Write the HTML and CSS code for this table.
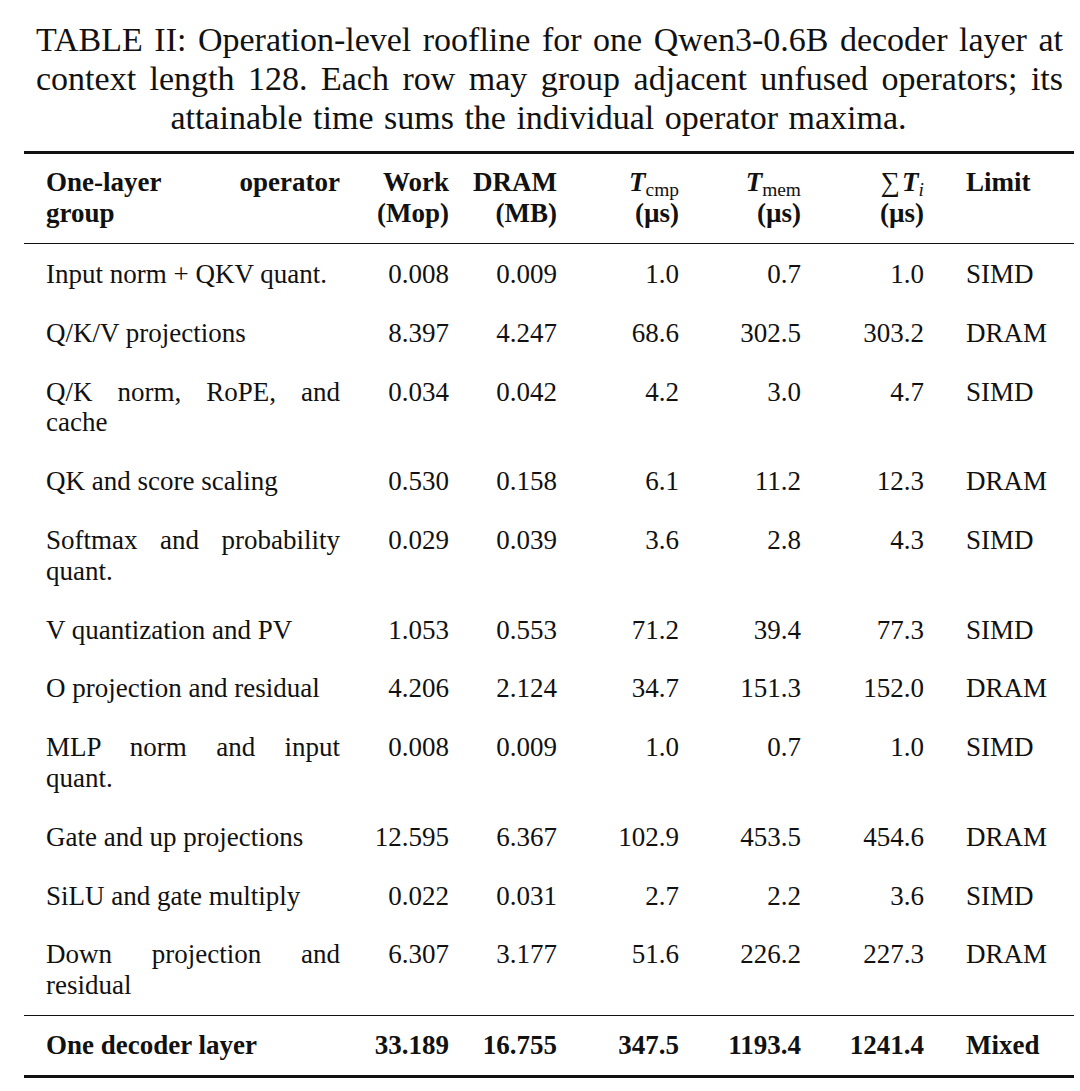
FILE: index.html
```html
<!DOCTYPE html>
<html>
<head>
  <title>TABLE II: Operation-level roofline</title>
  <link rel="stylesheet" href="styles.css">
</head>
<body>

<div class="page">
  <p class="caption">
    <span class="cap-line">TABLE II: Operation-level roofline for one Qwen3-0.6B decoder layer at</span>
    <span class="cap-line">context length 128. Each row may group adjacent unfused operators; its</span>
    <span class="cap-line cap-last">attainable time sums the individual operator maxima.</span>
  </p>

  <div class="roofline">
    <div class="row head-row">
      <div class="cell name"><span class="just">One-layer operator</span>group</div>
      <div class="cell num">Work<br>(Mop)</div>
      <div class="cell num">DRAM<br>(MB)</div>
      <div class="cell num"><i class="mv">T</i><sub class="sb">cmp</sub><br>(µs)</div>
      <div class="cell num"><i class="mv">T</i><sub class="sb">mem</sub><br>(µs)</div>
      <div class="cell num"><span class="sum">∑</span><i class="mv">T</i><sub class="sb sbi">i</sub><br>(µs)</div>
      <div class="cell lim">Limit</div>
    </div>

    <div class="body-rows">
      <div class="row">
        <div class="cell name">Input norm + QKV quant.</div>
        <div class="cell num">0.008</div>
        <div class="cell num">0.009</div>
        <div class="cell num">1.0</div>
        <div class="cell num">0.7</div>
        <div class="cell num">1.0</div>
        <div class="cell lim">SIMD</div>
      </div>
      <div class="row">
        <div class="cell name">Q/K/V projections</div>
        <div class="cell num">8.397</div>
        <div class="cell num">4.247</div>
        <div class="cell num">68.6</div>
        <div class="cell num">302.5</div>
        <div class="cell num">303.2</div>
        <div class="cell lim">DRAM</div>
      </div>
      <div class="row">
        <div class="cell name"><span class="just">Q/K norm, RoPE, and</span>cache</div>
        <div class="cell num">0.034</div>
        <div class="cell num">0.042</div>
        <div class="cell num">4.2</div>
        <div class="cell num">3.0</div>
        <div class="cell num">4.7</div>
        <div class="cell lim">SIMD</div>
      </div>
      <div class="row">
        <div class="cell name">QK and score scaling</div>
        <div class="cell num">0.530</div>
        <div class="cell num">0.158</div>
        <div class="cell num">6.1</div>
        <div class="cell num">11.2</div>
        <div class="cell num">12.3</div>
        <div class="cell lim">DRAM</div>
      </div>
      <div class="row">
        <div class="cell name"><span class="just">Softmax and probability</span>quant.</div>
        <div class="cell num">0.029</div>
        <div class="cell num">0.039</div>
        <div class="cell num">3.6</div>
        <div class="cell num">2.8</div>
        <div class="cell num">4.3</div>
        <div class="cell lim">SIMD</div>
      </div>
      <div class="row">
        <div class="cell name">V quantization and PV</div>
        <div class="cell num">1.053</div>
        <div class="cell num">0.553</div>
        <div class="cell num">71.2</div>
        <div class="cell num">39.4</div>
        <div class="cell num">77.3</div>
        <div class="cell lim">SIMD</div>
      </div>
      <div class="row">
        <div class="cell name">O projection and residual</div>
        <div class="cell num">4.206</div>
        <div class="cell num">2.124</div>
        <div class="cell num">34.7</div>
        <div class="cell num">151.3</div>
        <div class="cell num">152.0</div>
        <div class="cell lim">DRAM</div>
      </div>
      <div class="row">
        <div class="cell name"><span class="just">MLP norm and input</span>quant.</div>
        <div class="cell num">0.008</div>
        <div class="cell num">0.009</div>
        <div class="cell num">1.0</div>
        <div class="cell num">0.7</div>
        <div class="cell num">1.0</div>
        <div class="cell lim">SIMD</div>
      </div>
      <div class="row">
        <div class="cell name">Gate and up projections</div>
        <div class="cell num">12.595</div>
        <div class="cell num">6.367</div>
        <div class="cell num">102.9</div>
        <div class="cell num">453.5</div>
        <div class="cell num">454.6</div>
        <div class="cell lim">DRAM</div>
      </div>
      <div class="row">
        <div class="cell name">SiLU and gate multiply</div>
        <div class="cell num">0.022</div>
        <div class="cell num">0.031</div>
        <div class="cell num">2.7</div>
        <div class="cell num">2.2</div>
        <div class="cell num">3.6</div>
        <div class="cell lim">SIMD</div>
      </div>
      <div class="row">
        <div class="cell name"><span class="just">Down projection and</span>residual</div>
        <div class="cell num">6.307</div>
        <div class="cell num">3.177</div>
        <div class="cell num">51.6</div>
        <div class="cell num">226.2</div>
        <div class="cell num">227.3</div>
        <div class="cell lim">DRAM</div>
      </div>
    </div>

    <div class="row total-row">
      <div class="cell name">One decoder layer</div>
      <div class="cell num">33.189</div>
      <div class="cell num">16.755</div>
      <div class="cell num">347.5</div>
      <div class="cell num">1193.4</div>
      <div class="cell num">1241.4</div>
      <div class="cell lim">Mixed</div>
    </div>
  </div>
</div>

</body>
</html>
```

FILE: styles.css
```css
body {
  margin: 0;
  background-color: #fff;
  color: #111;
  font-family: "Liberation Serif", "Times New Roman", serif;
}

.page {
  width: 1050px;
  padding: 20px 0 0 24px;
}

/* caption above the table */
.caption {
  margin: 0 11px 14px 12px;
  font-size: 34px;
  line-height: 39px;
}

.cap-line {
  display: block;
  white-space: nowrap;
  text-align: justify;
  text-align-last: justify;
}

.cap-last {
  text-align-last: center;
  word-spacing: 2px;
  padding-right: 22px;
}

/* the table itself */
.roofline {
  border-top: 3px solid #111;
  border-bottom: 3px solid #111;
  font-size: 27px;
}

.row {
  display: grid;
  grid-template-columns: 294px 109px 108px 122px 122px 123px 1fr;
  padding: 14px 0 14px 22px;
  line-height: 30.8px;
}

.head-row {
  padding: 13px 0 14px 22px;
  line-height: 31px;
  font-weight: bold;
  border-bottom: 1.5px solid #111;
}

.body-rows {
  padding-top: 1px;
  border-bottom: 1.5px solid #111;
}

.total-row {
  font-weight: bold;
}

.cell.name {
  white-space: nowrap;
}

.just {
  display: block;
  text-align: justify;
  text-align-last: justify;
}

.cell.num {
  text-align: right;
}

.cell.lim {
  padding-left: 42px;
}

/* math bits in the header */
.mv {
  font-style: italic;
  font-weight: bold;
}

.sb {
  font-size: 0.72em;
  font-weight: normal;
  vertical-align: -0.25em;
  line-height: 0;
}

.sbi {
  font-style: italic;
}

.sum {
  font-weight: normal;
  margin-right: 2px;
}
```
